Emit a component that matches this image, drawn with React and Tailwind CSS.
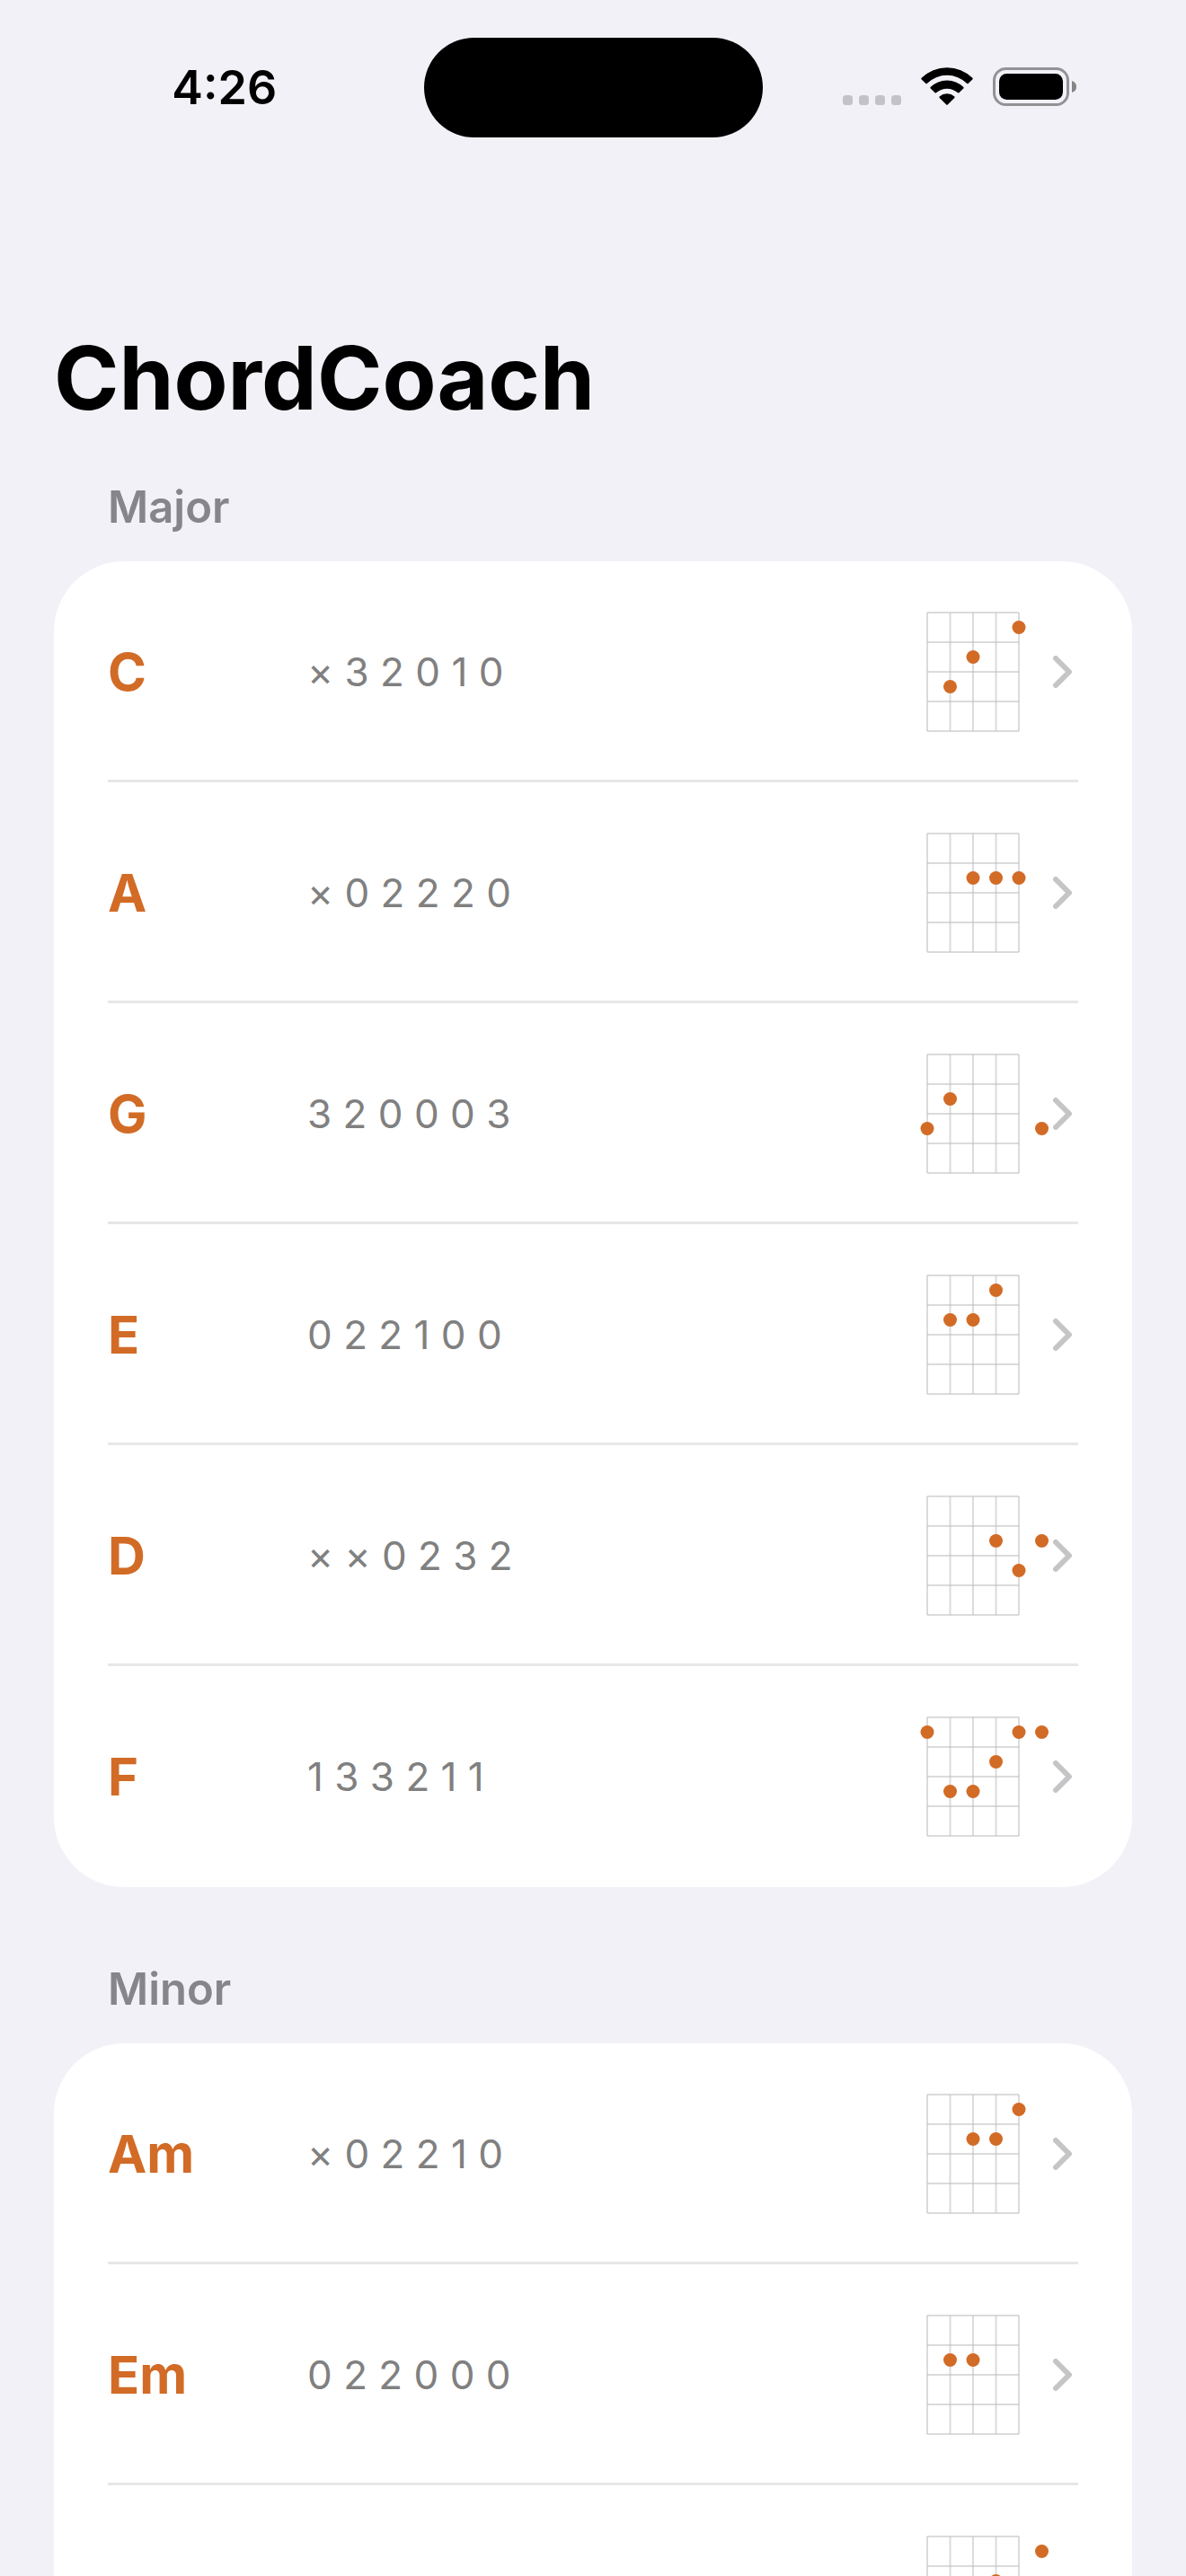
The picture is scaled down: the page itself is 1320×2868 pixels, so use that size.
const sections = [
  {
    title: "Major",
    chords: [
      { name: "C", frets: "×32010" },
      { name: "A", frets: "×02220" },
      { name: "G", frets: "320003" },
      { name: "E", frets: "022100" },
      { name: "D", frets: "××0232" },
      { name: "F", frets: "133211" },
    ],
  },
  {
    title: "Minor",
    chords: [
      { name: "Am", frets: "×02210" },
      { name: "Em", frets: "022000" },
      { name: "Dm", frets: "××0231" },
    ],
  },
];

const STRING_GAP = 25.5;
const FRET_GAP = 33;

function ChordDiagram({ frets }) {
  const lines = [0, 1, 2, 3, 4];
  return (
    <svg width="102" height="132" viewBox="0 0 102 132" className="shrink-0 overflow-visible" aria-hidden="true">
      <g stroke="#bebebe" strokeOpacity="0.56" strokeWidth="2">
        {lines.map((i) => (
          <line key={`s${i}`} x1={i * STRING_GAP} x2={i * STRING_GAP} y1="0" y2="132" />
        ))}
        {lines.map((i) => (
          <line key={`f${i}`} x1="0" x2="102" y1={i * FRET_GAP} y2={i * FRET_GAP} />
        ))}
      </g>
      {frets.split("").map((fret, i) =>
        Number(fret) > 0 ? (
          <circle key={i} cx={i * STRING_GAP} cy={(Number(fret) - 0.5) * FRET_GAP} r="7.5" fill="#d26b26" />
        ) : null
      )}
    </svg>
  );
}

function Chevron() {
  return (
    <svg width="22" height="36" viewBox="0 0 22 36" className="shrink-0" aria-hidden="true">
      <path d="M3 3 L18 18 L3 33" fill="none" stroke="#c5c5c7" strokeWidth="6" strokeLinecap="round" strokeLinejoin="round" />
    </svg>
  );
}

function StatusBar() {
  return (
    <div className="grid shrink-0 grid-cols-[1fr_377px_1fr] items-center pt-[42px]">
      <time className="pl-7 text-center text-[52px] leading-[60px] font-semibold">4:26</time>
      <div className="h-[111px] rounded-full bg-black" />
      <div className="flex items-center justify-end pr-[122px]">
        <svg width="65" height="45" viewBox="0 0 65 45" aria-hidden="true" fill="#c3c2c7">
          <rect x="0" y="31" width="11" height="11" rx="3.5" />
          <rect x="18" y="31" width="11" height="11" rx="3.5" />
          <rect x="36" y="31" width="11" height="11" rx="3.5" />
          <rect x="54" y="31" width="11" height="11" rx="3.5" />
        </svg>
        <svg width="58" height="45" viewBox="0 0 58 45" className="ml-[22px]" aria-label="Wi-Fi">
          <path d="M0.6 11.8 A40.5 40.5 0 0 1 57.4 11.8 Q58 12.6 57.3 13.4 L52.6 18 Q52 18.5 51.3 17.9 A32 32 0 0 0 6.7 17.9 Q6 18.5 5.4 18 L0.7 13.4 Q0 12.6 0.6 11.8 Z" />
          <path d="M10.6 22 A26.5 26.5 0 0 1 47.4 22 Q48 22.8 47.3 23.5 L42.4 28.3 Q41.8 28.8 41.1 28.3 A18 18 0 0 0 16.9 28.3 Q16.2 28.8 15.6 28.3 L10.7 23.5 Q10 22.8 10.6 22 Z" />
          <path d="M20.6 32.4 A12.8 12.8 0 0 1 37.4 32.4 Q38 33.2 37.3 33.9 L29.7 41.6 Q29 42.3 28.3 41.6 L20.7 33.9 Q20 33.2 20.6 32.4 Z" />
        </svg>
        <svg width="93" height="45" viewBox="0 0 93 45" className="ml-[22px]" aria-label="Battery">
          <rect x="1.5" y="1.5" width="82" height="40" rx="13" fill="none" stroke="#929194" strokeWidth="3" />
          <rect x="7" y="7" width="71" height="29" rx="8.5" />
          <path d="M88 15 Q93 16.5 93 21.5 Q93 26.5 88 28 Z" fill="#858587" />
        </svg>
      </div>
    </div>
  );
}

function ChordRow({ chord }) {
  return (
    <li className="group">
      <a href={`#${chord.name}`} className="relative flex h-[246px] items-center">
        <span className="w-[222px] shrink-0 text-[58px] leading-[60px] font-bold text-[#d26b26]">{chord.name}</span>
        <span className="grow text-[44px] leading-[60px] text-[#808080] [font-feature-settings:'calt'_0]">
          {chord.frets.split("").join(" ")}
        </span>
        <ChordDiagram frets={chord.frets} />
        <span className="flex pr-1.5 pl-[38px]">
          <Chevron />
        </span>
        <span className="absolute inset-x-0 bottom-0 h-[3px] bg-[#e7e7e7] group-last:hidden" />
      </a>
    </li>
  );
}

export default function App() {
  return (
    <div className="flex h-screen flex-col overflow-hidden bg-[#f2f1f7] font-['Inter','Liberation_Sans',sans-serif] text-black">
      <StatusBar />
      <main className="min-h-0 grow overflow-y-auto px-[60px] pt-52 [scrollbar-width:none]">
        <h1 className="text-[98px] leading-[120px] font-bold">ChordCoach</h1>
        <div className="flex flex-col gap-[78px] pt-12 pb-[78px]">
          {sections.map((section) => (
            <section key={section.title}>
              <h2 className="px-[60px] pb-6 text-[49px] leading-[72px] font-semibold text-[#86858a]">{section.title}</h2>
              <ul className="rounded-[78px] bg-white px-[60px]">
                {section.chords.map((chord) => (
                  <ChordRow key={chord.name} chord={chord} />
                ))}
              </ul>
            </section>
          ))}
        </div>
      </main>
    </div>
  );
}
